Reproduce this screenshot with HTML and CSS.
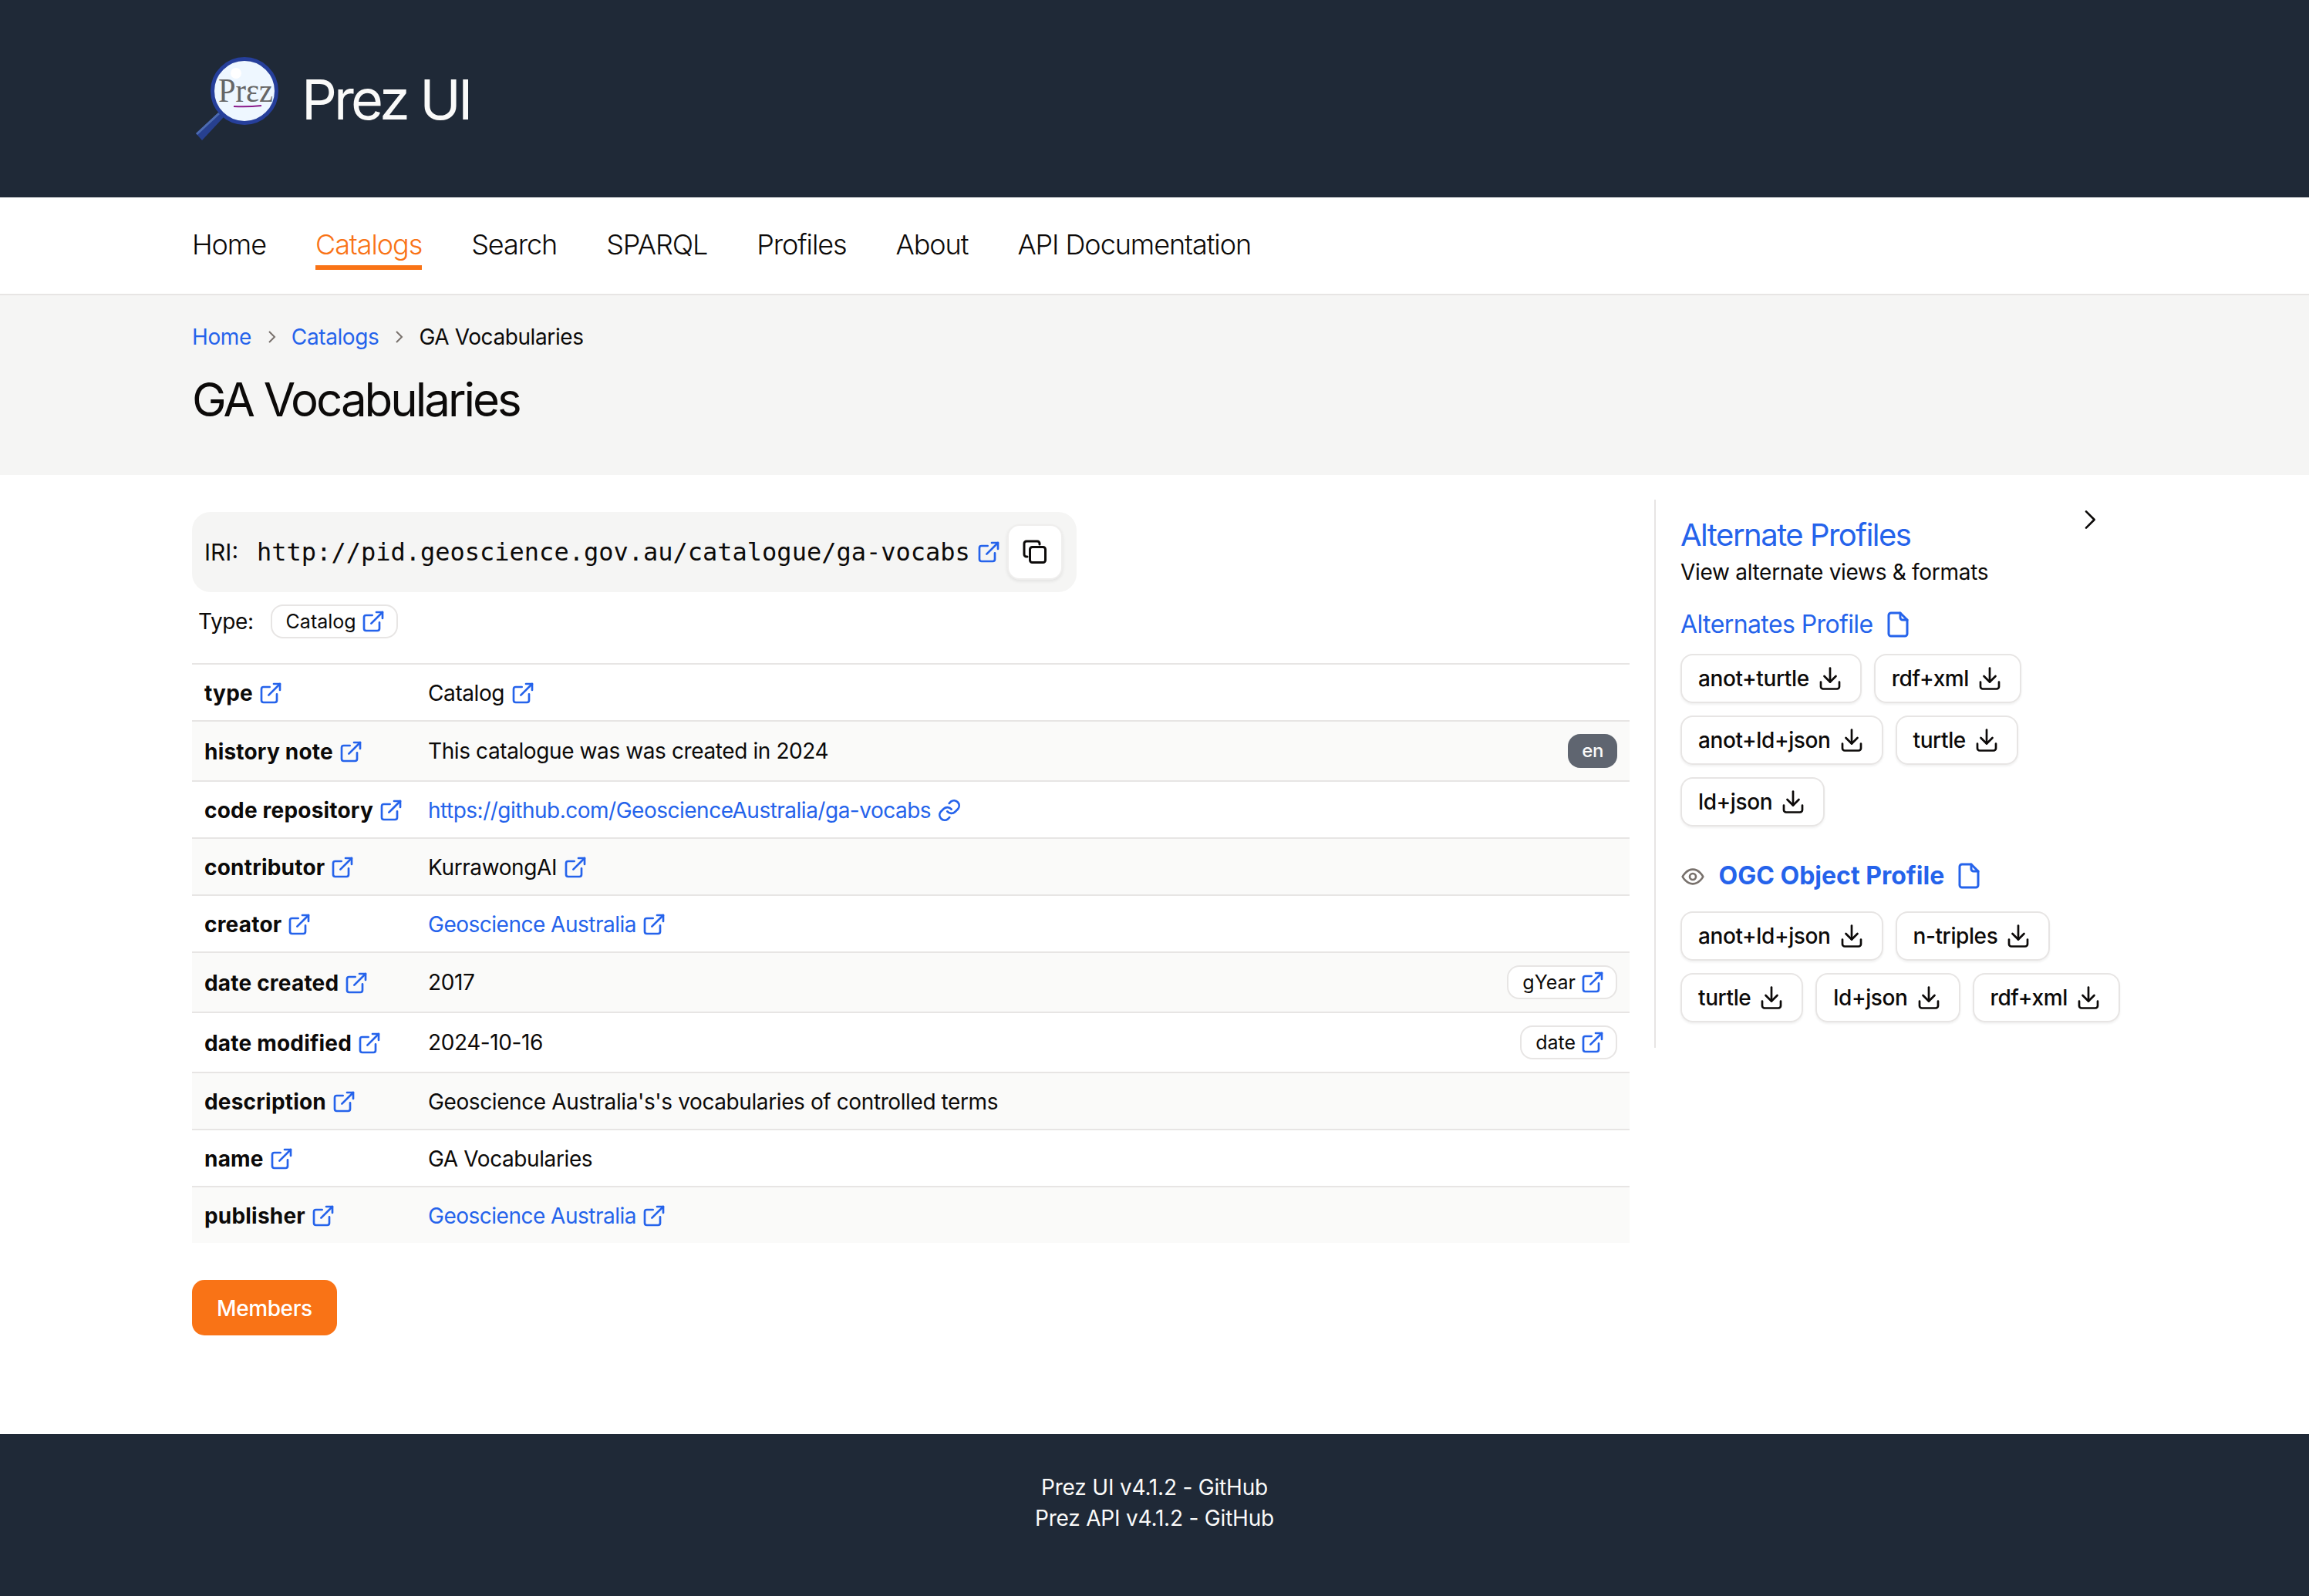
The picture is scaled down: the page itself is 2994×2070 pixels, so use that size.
FILE: index.html

```html
<!DOCTYPE html>
<html lang="en">
<head>
  <meta charset="UTF-8" />
  <title>GA Vocabularies | Prez UI</title>
  <link rel="stylesheet" href="styles.css">
</head>
<body>
  <svg class="sprites" width="0" height="0">
    <symbol id="ext" viewBox="0 0 24 24"><path d="M18 13v6a2 2 0 0 1-2 2H5a2 2 0 0 1-2-2V8a2 2 0 0 1 2-2h6"/><path d="M15 3h6v6"/><path d="M10 14 21 3"/></symbol>
    <symbol id="download" viewBox="0 0 24 24"><path d="M4 15v4a2 2 0 0 0 2 2h12a2 2 0 0 0 2-2v-4"/><path d="M7 10l5 5 5-5"/><path d="M12 15V3"/></symbol>
    <symbol id="file" viewBox="0 0 24 24"><path d="M14 2H6a2 2 0 0 0-2 2v16a2 2 0 0 0 2 2h12a2 2 0 0 0 2-2V8z"/><path d="M14 2v4a2 2 0 0 0 2 2h4"/></symbol>
  </svg>

  <header class="site-header">
    <svg class="logo" viewBox="0 0 108 108" width="108" height="108">
      <path class="logo-handle" d="M0 99 8 108 36 78 29 72z"/>
      <path class="logo-handle-light" d="M0 99 2 101 31 74 29 72z"/>
      <circle class="logo-glass" cx="63" cy="44" r="41.500"/>
      <circle class="logo-shine" cx="52" cy="21" r="7"/>
      <text class="logo-text" x="29" y="58" textLength="71" lengthAdjust="spacingAndGlyphs">Prεz</text>
      <path class="logo-line" d="M49 64q18 1 36-1"/>
    </svg>
    <span class="site-title">Prez UI</span>
  </header>

  <nav class="site-nav">
    <a href="#">Home</a>
    <a href="#" class="active">Catalogs</a>
    <a href="#">Search</a>
    <a href="#">SPARQL</a>
    <a href="#">Profiles</a>
    <a href="#">About</a>
    <a href="#">API Documentation</a>
  </nav>

  <section class="page-head">
    <div class="crumbs">
      <a href="#">Home</a>
      <svg class="crumb-sep" viewBox="0 0 24 24"><path d="m9 5 7 7-7 7"/></svg>
      <a href="#">Catalogs</a>
      <svg class="crumb-sep" viewBox="0 0 24 24"><path d="m9 5 7 7-7 7"/></svg>
      <span>GA Vocabularies</span>
    </div>
    <h1>GA Vocabularies</h1>
  </section>

  <main class="content">
    <div class="left-col">
      <div class="iri-box">
        <span class="iri-label">IRI:</span>
        <span class="iri-value">http://pid.geoscience.gov.au/catalogue/ga-vocabs</span>
        <svg class="icon"><use href="#ext"/></svg>
        <button class="copy-btn">
          <svg viewBox="0 0 32 32" width="32" height="32"><rect x="9.500" y="9.500" width="20" height="20" rx="3"/><path d="M6 22H5a3 3 0 0 1-3-3V5a3 3 0 0 1 3-3h14a3 3 0 0 1 3 3v1"/></svg>
        </button>
      </div>
      <div class="type-row">
        <span>Type:</span>
        <span class="chip">Catalog <svg class="icon"><use href="#ext"/></svg></span>
      </div>

      <table class="props">
        <tr>
          <th>type <svg class="icon"><use href="#ext"/></svg></th>
          <td>Catalog <svg class="icon"><use href="#ext"/></svg></td>
        </tr>
        <tr>
          <th>history note <svg class="icon"><use href="#ext"/></svg></th>
          <td><div class="cell-row">This catalogue was was created in 2024 <span class="lang">en</span></div></td>
        </tr>
        <tr>
          <th>code repository <svg class="icon"><use href="#ext"/></svg></th>
          <td><a href="#">https://github.com/GeoscienceAustralia/ga-vocabs
            <svg class="icon" viewBox="0 0 24 24"><path d="M10 13a5 5 0 0 0 7.500.5l3-3a5 5 0 0 0-7-7l-1.700 1.700"/><path d="M14 11a5 5 0 0 0-7.500-.5l-3 3a5 5 0 0 0 7 7l1.700-1.700"/></svg></a></td>
        </tr>
        <tr>
          <th>contributor <svg class="icon"><use href="#ext"/></svg></th>
          <td>KurrawongAI <svg class="icon"><use href="#ext"/></svg></td>
        </tr>
        <tr>
          <th>creator <svg class="icon"><use href="#ext"/></svg></th>
          <td><a href="#">Geoscience Australia <svg class="icon"><use href="#ext"/></svg></a></td>
        </tr>
        <tr>
          <th>date created <svg class="icon"><use href="#ext"/></svg></th>
          <td><div class="cell-row">2017 <span class="chip small">gYear <svg class="icon"><use href="#ext"/></svg></span></div></td>
        </tr>
        <tr>
          <th>date modified <svg class="icon"><use href="#ext"/></svg></th>
          <td><div class="cell-row">2024-10-16 <span class="chip small">date <svg class="icon"><use href="#ext"/></svg></span></div></td>
        </tr>
        <tr>
          <th>description <svg class="icon"><use href="#ext"/></svg></th>
          <td>Geoscience Australia's's vocabularies of controlled terms</td>
        </tr>
        <tr>
          <th>name <svg class="icon"><use href="#ext"/></svg></th>
          <td>GA Vocabularies</td>
        </tr>
        <tr>
          <th>publisher <svg class="icon"><use href="#ext"/></svg></th>
          <td><a href="#">Geoscience Australia <svg class="icon"><use href="#ext"/></svg></a></td>
        </tr>
      </table>

      <a href="#" class="members-btn">Members</a>
    </div>

    <aside class="profiles">
      <svg class="collapse" viewBox="0 0 24 24" width="32" height="32"><path d="m9 4 8 8-8 8"/></svg>
      <h2>Alternate Profiles</h2>
      <p>View alternate views &amp; formats</p>

      <h3><a href="#">Alternates Profile</a> <svg class="icon file-icon"><use href="#file"/></svg></h3>
      <div class="formats">
        <a href="#" class="format">anot+turtle <svg class="icon"><use href="#download"/></svg></a>
        <a href="#" class="format">rdf+xml <svg class="icon"><use href="#download"/></svg></a>
        <a href="#" class="format">anot+ld+json <svg class="icon"><use href="#download"/></svg></a>
        <a href="#" class="format">turtle <svg class="icon"><use href="#download"/></svg></a>
        <a href="#" class="format">ld+json <svg class="icon"><use href="#download"/></svg></a>
      </div>

      <h3 class="current">
        <svg class="icon eye" viewBox="0 0 24 24"><path d="M2 12s3.600-7 10-7 10 7 10 7-3.600 7-10 7-10-7-10-7z"/><circle cx="12" cy="12" r="3"/></svg>
        <a href="#">OGC Object Profile</a> <svg class="icon file-icon"><use href="#file"/></svg>
      </h3>
      <div class="formats">
        <a href="#" class="format">anot+ld+json <svg class="icon"><use href="#download"/></svg></a>
        <a href="#" class="format">n-triples <svg class="icon"><use href="#download"/></svg></a>
        <a href="#" class="format">turtle <svg class="icon"><use href="#download"/></svg></a>
        <a href="#" class="format">ld+json <svg class="icon"><use href="#download"/></svg></a>
        <a href="#" class="format">rdf+xml <svg class="icon"><use href="#download"/></svg></a>
      </div>
    </aside>
  </main>

  <footer class="site-footer">
    <div>Prez UI v4.1.2 - GitHub</div>
    <div>Prez API v4.1.2 - GitHub</div>
  </footer>
</body>
</html>
```

FILE: styles.css

```css
* {
  box-sizing: border-box;
}

body {
  margin: 0;
  font-family: Inter, "Noto Sans", sans-serif;
  font-size: 28px;
  line-height: 40px;
  letter-spacing: -0.4px;
  color: #0c0a09;
  background: white;
}

a {
  color: #2563eb;
  text-decoration: none;
}

.sprites {
  position: absolute;
}

.icon {
  width: 32px;
  height: 32px;
  vertical-align: -6px;
  fill: none;
  stroke: #2563eb;
  stroke-width: 2;
  stroke-linecap: round;
  stroke-linejoin: round;
}

/* header */
.site-header {
  display: flex;
  align-items: center;
  gap: 29px;
  height: 256px;
  padding: 0 249px;
  background: #1f2937;
}

.logo {
  flex: none;
  margin-left: 5px;
}

.logo-handle {
  fill: #27408f;
}

.logo-handle-light {
  fill: #4d6bb0;
}

.logo-glass {
  fill: #eef7ff;
  stroke: #263f9b;
  stroke-width: 5;
}

.logo-shine {
  fill: white;
}

.logo-text {
  font-family: "Liberation Serif", serif;
  font-size: 45px;
  letter-spacing: 0;
  fill: #666;
}

.logo-line {
  fill: none;
  stroke: #8a1a8a;
  stroke-width: 2;
}

.site-title {
  margin-top: 2px;
  font-size: 72px;
  line-height: 1;
  letter-spacing: -3.9px;
  color: #fafaf9;
}

/* nav */
.site-nav {
  display: flex;
  gap: 64px;
  height: 127px;
  padding: 0 249px;
  align-items: center;
  background: white;
  border-bottom: 2px solid #e7e5e4;
  font-size: 36px;
  font-weight: 300;
  letter-spacing: -1.07px;
}

.site-nav a {
  color: #0c0a09;
  padding: 7px 0 7px;
  border-bottom: 6px solid transparent;
  margin-top: 2px;
}

.site-nav a.active {
  color: #f97316;
  border-bottom-color: #f97316;
}

/* breadcrumbs and page title */
.page-head {
  height: 233px;
  padding: 34px 249px 0;
  background: #f5f5f4;
}

.crumbs {
  display: flex;
  align-items: center;
  gap: 14px;
}

.crumb-sep {
  width: 24px;
  height: 24px;
  fill: none;
  stroke: #78716c;
  stroke-width: 2;
}

h1 {
  margin: 25px 0 0;
  font-size: 60px;
  font-weight: 400;
  line-height: 72px;
  letter-spacing: -3px;
}

/* main content */
.content {
  display: flex;
  align-items: flex-start;
  gap: 32px;
  height: 1244px;
  padding: 32px 249px 0;
}

.left-col {
  width: 1864px;
  flex: none;
  padding-top: 16px;
}

.iri-box {
  display: inline-flex;
  align-items: center;
  gap: 8px;
  width: 1147px;
  height: 104px;
  padding: 0 16px;
  background: #f5f5f4;
  border-radius: 24px;
}

.iri-label {
  margin-right: 16px;
  font-size: 30px;
  letter-spacing: 0;
}

.iri-value {
  font-family: "DejaVu Sans Mono", monospace;
  font-size: 32px;
  letter-spacing: 0;
  white-space: nowrap;
}

.copy-btn {
  display: flex;
  flex: none;
  align-items: center;
  justify-content: center;
  width: 72px;
  height: 72px;
  padding: 0;
  background: white;
  border: 2px solid #efeeed;
  border-radius: 16px;
  box-shadow: 0 2px 4px rgba(0,0,0,0.08);
}

.copy-btn svg {
  fill: none;
  stroke: #0c0a09;
  stroke-width: 3;
  stroke-linecap: round;
}

.type-row {
  display: flex;
  align-items: center;
  gap: 22px;
  margin: 16px 0 0 8px;
  height: 44px;
}

.chip {
  display: inline-flex;
  align-items: center;
  gap: 6px;
  height: 44px;
  padding: 0 14px 0 18px;
  font-size: 25px;
  letter-spacing: 0;
  border: 2px solid #e7e5e4;
  border-radius: 16px;
  background: white;
}

/* property table */
.props {
  width: 100%;
  margin-top: 32px;
  border-collapse: collapse;
}

.props tr {
  border-top: 2px solid #e7e5e4;
}

.props tr:nth-child(even) {
  background: #fafaf9;
}

.props th {
  width: 306px;
  padding: 17px 16px 15px;
  font-weight: 700;
  text-align: left;
  white-space: nowrap;
  letter-spacing: 0.2px;
}

.props td {
  padding: 17px 16px 15px 0;
}

.props td a {
  letter-spacing: -0.5px;
}

.cell-row {
  display: flex;
  justify-content: space-between;
  align-items: center;
  margin: -1px 0 1px;
}

.lang {
  height: 44px;
  padding: 0 18px;
  font-size: 24px;
  line-height: 44px;
  font-weight: 500;
  color: #fafaf9;
  background: #5f6570;
  border-radius: 16px;
}

.members-btn {
  display: inline-block;
  margin-top: 48px;
  padding: 17px 32px 15px;
  color: white;
  font-weight: 500;
  background: #f97316;
  border-radius: 16px;
}

/* right panel */
.profiles {
  position: relative;
  flex: none;
  width: 606px;
  height: 711px;
  padding: 20px 0 0 32px;
  border-left: 2px solid #e7e5e4;
}

.collapse {
  position: absolute;
  top: 10px;
  right: 26px;
  fill: none;
  stroke: #0c0a09;
  stroke-width: 2;
  stroke-linecap: round;
  stroke-linejoin: round;
}

.profiles h2 {
  margin: 0;
  font-size: 40px;
  font-weight: 400;
  line-height: 52px;
  letter-spacing: -1.5px;
  color: #2563eb;
}

.profiles p {
  margin: 2px 0 0;
  letter-spacing: -0.3px;
}

.profiles h3 {
  margin: 26px 0 16px;
  font-size: 32px;
  font-weight: 400;
  line-height: 44px;
  letter-spacing: -0.6px;
}

.profiles h3.current {
  margin: 42px 0 24px;
  font-weight: 700;
  letter-spacing: 0;
}

.file-icon {
  width: 36px;
  height: 36px;
  margin-left: 6px;
  vertical-align: -7px;
}

.eye {
  width: 32px;
  height: 32px;
  margin-right: 10px;
  stroke: #78716c;
}

.formats {
  display: flex;
  flex-wrap: wrap;
  gap: 16px;
}

.format {
  display: inline-flex;
  align-items: center;
  gap: 9px;
  height: 64px;
  padding: 0 21px;
  color: #0c0a09;
  font-weight: 500;
  border: 2px solid #e7e5e4;
  border-radius: 16px;
  box-shadow: 0 2px 3px rgba(0,0,0,0.06);
}

.format .icon {
  stroke: #0c0a09;
  stroke-width: 1.8;
  width: 36px;
  height: 36px;
}

/* footer */
.site-footer {
  height: 210px;
  padding-top: 49px;
  text-align: center;
  letter-spacing: -0.2px;
  color: #fafaf9;
  background: #1f2937;
}
```
